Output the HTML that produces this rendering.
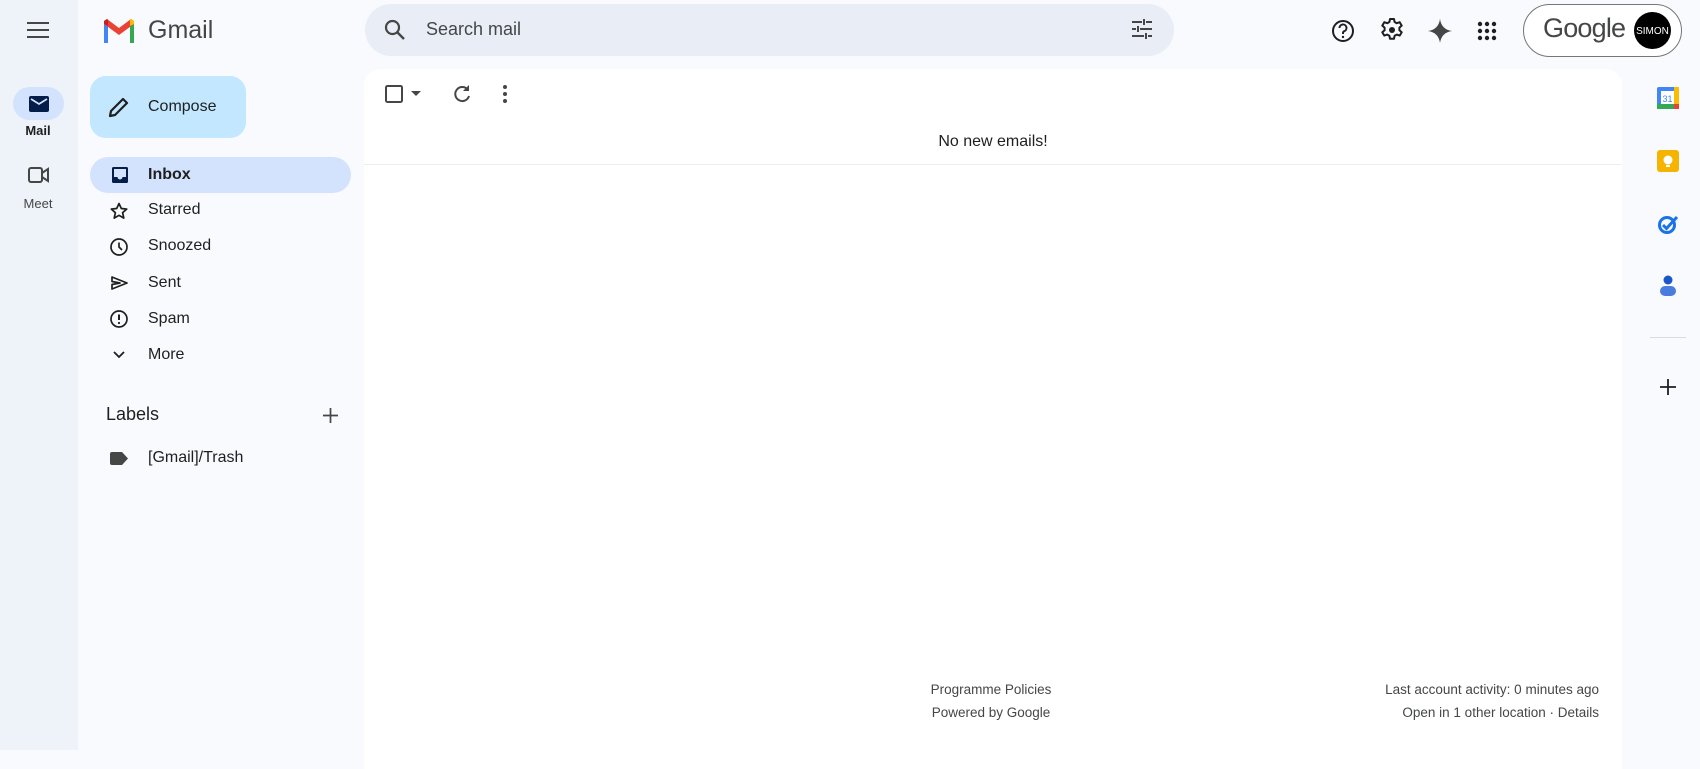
<!DOCTYPE html>
<html><head><meta charset="utf-8"><style>
*{box-sizing:border-box;margin:0;padding:0}
body{width:1700px;height:750px;background:#f8fafd;font-family:"Liberation Sans",Arial,sans-serif;color:#1f1f1f;position:relative;overflow:hidden}
.abs{position:absolute}
.rail{left:0;top:0;width:78px;height:750px;background:#eef2f9}
.t{position:absolute;white-space:nowrap}
.nav{font-size:16px;color:#1f1f1f}
svg{position:absolute;overflow:visible}
</style></head><body>
<div class="abs rail"></div>
<svg style="left:26px;top:20px" width="24" height="20"><path d="M1 3h22M1 10h22M1 17h22" stroke="#444746" stroke-width="2"/></svg>
<svg style="left:102px;top:18px" width="34" height="26" viewBox="0 0 34 26">
<path d="M2 25V6l4 2v17z" fill="#4285f4"/><path d="M28 25V8l4-2v19z" fill="#34a853"/>
<path d="M2 6 17 17 32 6 32 3 29 1 17 10 5 1 2 3z" fill="#ea4335"/>
<path d="M28 8l4-2V3l-3-2-1 1z" fill="#fbbc04"/><path d="M2 6v-3l3-2 1 1v6z" fill="#c5221f"/>
</svg>
<div class="t" style="left:148px;top:16px;font-size:25px;color:#444746">Gmail</div>
<div class="abs" style="left:365px;top:4px;width:809px;height:52px;border-radius:26px;background:#e9eef6"></div>
<svg style="left:384px;top:19px" width="22" height="22"><circle cx="8.5" cy="8.5" r="6.5" fill="none" stroke="#444746" stroke-width="2.2"/><path d="M13 13l7 7" stroke="#444746" stroke-width="2.4"/></svg>
<div class="t" style="left:426px;top:19px;font-size:18px;color:#444746">Search mail</div>
<svg style="left:1131px;top:19px" width="22" height="20"><path d="M1 3h10M15 3h6M1 10h4M9 10h12M1 17h12M17 17h4M13 0v6M7 7v6M15 14v6" stroke="#444746" stroke-width="2"/></svg>
<svg style="left:1331px;top:19px" width="24" height="24"><circle cx="12" cy="12" r="10" fill="none" stroke="#1f1f1f" stroke-width="2"/><path d="M8.5 9a3.5 3.5 0 1 1 4.5 3.3c-.8.4-1 1-1 2v.7" fill="none" stroke="#1f1f1f" stroke-width="2"/><circle cx="12" cy="18" r="1.2" fill="#1f1f1f"/></svg>
<svg style="left:1380px;top:18px" width="24" height="24" viewBox="0 0 24 24"><path d="M10 1h4l.6 3 2.2 1.2 2.9-1 2 3.4-2.3 2 0 2.6 2.3 2-2 3.4-2.9-1-2.2 1.2-.6 3h-4l-.6-3-2.2-1.2-2.9 1-2-3.4 2.3-2v-2.6l-2.3-2 2-3.4 2.9 1L9.4 4z" fill="none" stroke="#1f1f1f" stroke-width="2" stroke-linejoin="round"/><circle cx="12" cy="12" r="3" fill="#1f1f1f"/></svg>
<svg style="left:1428px;top:19px" width="24" height="24"><path d="M12 0C13 7 17 11 24 12 17 13 13 17 12 24 11 17 7 13 0 12 7 11 11 7 12 0z" fill="#444746"/></svg>
<svg style="left:1477px;top:21px" width="20" height="20" fill="#1f1f1f"><circle cx="3" cy="3" r="2.2"/><circle cx="10" cy="3" r="2.2"/><circle cx="17" cy="3" r="2.2"/><circle cx="3" cy="10" r="2.2"/><circle cx="10" cy="10" r="2.2"/><circle cx="17" cy="10" r="2.2"/><circle cx="3" cy="17" r="2.2"/><circle cx="10" cy="17" r="2.2"/><circle cx="17" cy="17" r="2.2"/></svg>
<div class="abs" style="left:1523px;top:4px;width:159px;height:53px;border:1.5px solid #747775;border-radius:27px;background:#fff"></div>
<div class="t" style="left:1543px;top:13px;font-size:27px;color:#444746;letter-spacing:-0.8px">Google</div>
<div class="abs" style="left:1634px;top:12px;width:37px;height:37px;border-radius:50%;background:#000;color:#fff;font-size:10px;text-align:center;line-height:40px">SIMON</div>
<div class="abs" style="left:13px;top:87px;width:51px;height:33px;border-radius:17px;background:#d3e3fd"></div>
<svg style="left:29px;top:96px" width="20" height="16"><rect x="0" y="0" width="20" height="16" rx="2" fill="#041e49"/><path d="M2 3l8 5 8-5" fill="none" stroke="#d3e3fd" stroke-width="1.8"/></svg>
<div class="t" style="left:0;width:76px;text-align:center;top:123px;font-size:13px;font-weight:bold">Mail</div>
<svg style="left:28px;top:167px" width="22" height="16"><rect x="1" y="1" width="13" height="14" rx="2" fill="none" stroke="#444746" stroke-width="2"/><path d="M14 6l6-4v12l-6-4" fill="none" stroke="#444746" stroke-width="2"/></svg>
<div class="t" style="left:0;width:76px;text-align:center;top:196px;font-size:13px;color:#444746">Meet</div>
<div class="abs" style="left:90px;top:76px;width:156px;height:62px;border-radius:16px;background:#c2e7ff"></div>
<svg style="left:108px;top:96px" width="22" height="22"><path d="M2 20l1-5L15 3l4 4L7 19z" fill="none" stroke="#1f1f1f" stroke-width="2.2" stroke-linejoin="round"/></svg>
<div class="t" style="left:148px;top:98px;font-size:16px;font-weight:500">Compose</div>
<div class="abs" style="left:90px;top:157px;width:261px;height:36px;border-radius:18px;background:#d3e3fd"></div>
<svg style="left:111px;top:166px" width="18" height="18"><rect x="1" y="1" width="16" height="16" rx="1.5" fill="#041e49"/><path d="M3 3h12v8h-3.5a2.5 2.5 0 0 1-5 0H3z" fill="#d3e3fd"/></svg>
<div class="t nav" style="left:148px;top:166px;font-weight:bold">Inbox</div>
<svg style="left:110px;top:202px" width="18" height="18"><path d="M9 1.5l2.3 5 5.4.6-4.1 3.6 1.2 5.4L9 13.3l-4.8 2.8 1.2-5.4-4.1-3.6 5.4-.6z" fill="none" stroke="#1f1f1f" stroke-width="1.7" stroke-linejoin="round"/></svg>
<div class="t nav" style="left:148px;top:201px">Starred</div>
<svg style="left:110px;top:238px" width="18" height="18"><circle cx="9" cy="9" r="8" fill="none" stroke="#1f1f1f" stroke-width="1.7"/><path d="M9 4.5v4.5l3 3" fill="none" stroke="#1f1f1f" stroke-width="1.7"/></svg>
<div class="t nav" style="left:148px;top:237px">Snoozed</div>
<svg style="left:111px;top:276px" width="17" height="14"><path d="M1 1l15 6-15 6 0-4.5 8-1.5-8-1.5z" fill="none" stroke="#1f1f1f" stroke-width="1.7" stroke-linejoin="round"/></svg>
<div class="t nav" style="left:148px;top:274px">Sent</div>
<svg style="left:110px;top:310px" width="18" height="18"><circle cx="9" cy="9" r="8" fill="none" stroke="#1f1f1f" stroke-width="1.7"/><path d="M9 4.5v5.5" stroke="#1f1f1f" stroke-width="2"/><circle cx="9" cy="13" r="1.1" fill="#1f1f1f"/></svg>
<div class="t nav" style="left:148px;top:310px">Spam</div>
<svg style="left:113px;top:351px" width="12" height="8"><path d="M1 1l5 5 5-5" fill="none" stroke="#1f1f1f" stroke-width="1.8"/></svg>
<div class="t nav" style="left:148px;top:346px">More</div>
<div class="t" style="left:106px;top:404px;font-size:18px;font-weight:500">Labels</div>
<svg style="left:323px;top:408px" width="15" height="15"><path d="M7.5 0v15M0 7.5h15" stroke="#444746" stroke-width="1.7"/></svg>
<svg style="left:110px;top:452px" width="18" height="13"><path d="M0 2a2 2 0 0 1 2-2h10l6 6.5-6 6.5H2a2 2 0 0 1-2-2z" fill="#444746"/></svg>
<div class="t nav" style="left:148px;top:449px">[Gmail]/Trash</div>
<div class="abs" style="left:364px;top:69px;width:1258px;height:700px;background:#fff;border-radius:16px 16px 0 0"></div>
<svg style="left:385px;top:85px" width="18" height="18"><rect x="1" y="1" width="16" height="16" rx="1.5" fill="none" stroke="#444746" stroke-width="2"/></svg>
<svg style="left:411px;top:91px" width="10" height="6"><path d="M0 0h10L5 5z" fill="#444746"/></svg>
<svg style="left:452px;top:84px" width="20" height="20"><path d="M16 6A7 7 0 1 0 17 12" fill="none" stroke="#444746" stroke-width="2"/><path d="M17 1v6h-6z" fill="#444746"/></svg>
<svg style="left:503px;top:85px" width="4" height="18" fill="#444746"><circle cx="2" cy="2" r="2"/><circle cx="2" cy="9" r="2"/><circle cx="2" cy="16" r="2"/></svg>
<div class="t" style="left:364px;width:1258px;text-align:center;top:133px;font-size:16px">No new emails!</div>
<div class="abs" style="left:364px;top:164px;width:1258px;height:1px;background:#eceff1"></div>
<div class="t" style="left:864px;width:254px;text-align:center;top:678px;font-size:13.5px;color:#444746;line-height:23px">Programme Policies<br>Powered by Google</div>
<div class="t" style="right:101px;text-align:right;top:678px;font-size:13.5px;color:#444746;line-height:23px">Last account activity: 0 minutes ago<br>Open in 1 other location · Details</div>
<svg style="left:1657px;top:87px" width="22" height="22"><rect x="0" y="0" width="22" height="22" rx="2" fill="#4285f4"/><rect x="0" y="17" width="22" height="5" fill="#34a853"/><rect x="17" y="0" width="5" height="17" fill="#fbbc04"/><rect x="17" y="17" width="5" height="5" fill="#ea4335"/><rect x="4" y="4" width="13" height="13" fill="#fff"/><text x="10.5" y="15" font-size="9" text-anchor="middle" fill="#4285f4" font-family="Liberation Sans">31</text></svg>
<svg style="left:1657px;top:150px" width="22" height="22"><rect width="22" height="22" rx="3" fill="#f4b400"/><circle cx="11" cy="10" r="4.5" fill="#fff"/><rect x="9" y="15" width="4" height="2" fill="#fff"/></svg>
<svg style="left:1657px;top:213px" width="22" height="22"><circle cx="10" cy="12" r="7.5" fill="none" stroke="#1a73e8" stroke-width="3"/><path d="M6 12l3.5 3.5L20 4" fill="none" stroke="#1a73e8" stroke-width="3"/></svg>
<svg style="left:1659px;top:275px" width="18" height="21"><circle cx="9" cy="5" r="4.5" fill="#1a56c8"/><rect x="1" y="11" width="16" height="10" rx="5" fill="#4a7ce0"/></svg>
<div class="abs" style="left:1650px;top:337px;width:36px;height:1px;background:#dadce0"></div>
<svg style="left:1660px;top:379px" width="16" height="16"><path d="M8 0v16M0 8h16" stroke="#1f1f1f" stroke-width="1.8"/></svg>
</body></html>
